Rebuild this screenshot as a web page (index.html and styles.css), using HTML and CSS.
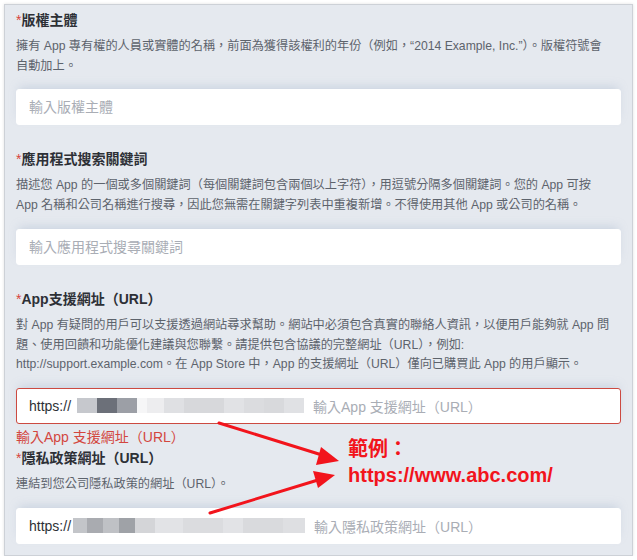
FILE: index.html
```html
<!DOCTYPE html>
<html lang="zh-Hant">
<head>
    <meta charset="UTF-8">
    <meta name="viewport" content="width=device-width, initial-scale=1.0">
    <title>App 資訊</title>
    <link rel="stylesheet" href="styles.css">
</head>
<body>
    <div class="panel">
        <div class="form-group">
            <label class="label"><span class="req">*</span>版權主體</label>
            <p class="hint">擁有 App 專有權的人員或實體的名稱，前面為獲得該權利的年份（例如，“2014 Example, Inc.”）。版權符號會<br>自動加上。</p>
            <input type="text" class="field" placeholder="輸入版權主體">
        </div>

        <div class="form-group">
            <label class="label"><span class="req">*</span>應用程式搜索關鍵詞</label>
            <p class="hint">描述您 App 的一個或多個關鍵詞（每個關鍵詞包含兩個以上字符），用逗號分隔多個關鍵詞。您的 App 可按<br>App 名稱和公司名稱進行搜尋，因此您無需在關鍵字列表中重複新增。不得使用其他 App 或公司的名稱。</p>
            <input type="text" class="field" placeholder="輸入應用程式搜尋關鍵詞">
        </div>

        <div class="form-group">
            <label class="label"><span class="req">*</span>App支援網址（URL）</label>
            <p class="hint">對 App 有疑問的用戶可以支援透過網站尋求幫助。網站中必須包含真實的聯絡人資訊，以便用戶能夠就 App 問<br>題、使用回饋和功能優化建議與您聯繫。請提供包含協議的完整網址（URL），例如:<br>http://support.example.com。在 App Store 中，App 的支援網址（URL）僅向已購買此 App 的用戶顯示。</p>
            <div class="field url has-error">
                <span class="value">https://</span>
                <span class="mask">
                    <i style="background:#c6c8cd;width:20px"></i><i style="background:#6c7079;width:20px"></i><i style="background:#9c9fa6;width:20px"></i><i style="background:#f6f6f7;width:10px"></i><i style="background:#ededef;width:17px"></i><i style="background:#dfe0e3;width:20px"></i><i style="background:#d7d8db;width:40px"></i><i style="background:#e1e2e5;width:20px"></i><i style="background:#dbdcdf;width:20px"></i><i style="background:#d8d9dc;width:20px"></i><i style="background:#e0e1e4;width:20px"></i>
                </span>
                <span class="placeholder">輸入App 支援網址（URL）</span>
            </div>
            <div class="error">輸入App 支援網址（URL）</div>
        </div>

        <div class="form-group last">
            <label class="label"><span class="req">*</span>隱私政策網址（URL）</label>
            <p class="hint">連結到您公司隱私政策的網址（URL）。</p>
            <div class="field url">
                <span class="value">https://</span>
                <span class="mask tight">
                    <i style="background:#c3c5c9;width:14px"></i><i style="background:#a9abb0;width:16px"></i><i style="background:#bfc1c5;width:16px"></i><i style="background:#9fa2a7;width:16px"></i><i style="background:#d4d5d8;width:20px"></i><i style="background:#e2e3e6;width:28px"></i><i style="background:#dbdcdf;width:40px"></i><i style="background:#e2e3e6;width:20px"></i><i style="background:#d9dadd;width:40px"></i><i style="background:#dedfe2;width:22px"></i>
                </span>
                <span class="placeholder">輸入隱私政策網址（URL）</span>
            </div>
        </div>
    </div>

    <!-- 標註：範例網址 -->
    <svg class="arrows" width="637" height="560" viewBox="0 0 637 560">
        <g stroke="#f2141c" stroke-width="3" stroke-linecap="round">
            <line x1="219" y1="423" x2="322" y2="455"/>
            <line x1="210" y1="513" x2="318" y2="480"/>
        </g>
        <g fill="#f2141c">
            <polygon points="339,461 316,465 321,447"/>
            <polygon points="335,475 318,488 313,471"/>
        </g>
    </svg>
    <div class="note">
        <div>範例：</div>
        <div>https://www.abc.com/</div>
    </div>
</body>
</html>
```

FILE: styles.css
```css
body {
    margin: 0;
    padding: 4px 4px 0 4px;
    background: #ffffff;
    font-family: "Liberation Sans", "Noto Sans CJK TC", sans-serif;
    color: #2d3036;
}
.panel {
    width: 605px;
    background: #e5e9ef;
    border: 1px solid #cdd1d7;
    box-shadow: 0 0 3px rgba(0, 0, 0, 0.12);
    padding: 5px 11px 11px 11px;
}
.form-group {
    margin-bottom: 24px;
}
.form-group.last {
    margin-bottom: 0;
}
.label {
    display: block;
    font-size: 14px;
    line-height: 20px;
    font-weight: bold;
    color: #2d3036;
}
.req {
    color: #d8453c;
    font-weight: normal;
}
.hint {
    margin: 7px 0 13px 0;
    font-size: 12.2px;
    line-height: 19.7px;
    color: #5d636c;
}
.field {
    display: block;
    box-sizing: border-box;
    width: 100%;
    height: 36px;
    margin: 0;
    padding: 0 12px;
    border: 1px solid #ffffff;
    border-radius: 3px;
    background: #ffffff;
    font-family: inherit;
    font-size: 14px;
    color: #2d3036;
    box-shadow: 0 -5px 9px -3px rgba(150, 168, 196, 0.35);
    outline: none;
}
.field::placeholder {
    color: #a9adb5;
}
.url {
    display: flex;
    align-items: center;
}
.url.has-error {
    border-color: #cc4a41;
}
.value {
    color: #2d3036;
}
.mask {
    display: flex;
    height: 15px;
    margin-left: 6px;
}
.mask.tight {
    margin-left: 2px;
}
.mask i {
    display: block;
    height: 100%;
}
.placeholder {
    margin-left: 9px;
    color: #a9adb5;
}
.error {
    font-size: 14px;
    line-height: 20px;
    margin-top: 3px;
    margin-bottom: -23px;
    color: #d3463e;
}
.arrows {
    position: absolute;
    top: 0;
    left: 0;
    pointer-events: none;
}
.note {
    position: absolute;
    left: 348px;
    top: 436px;
    font-size: 20px;
    line-height: 26px;
    font-weight: bold;
    color: #f2141c;
}
```
